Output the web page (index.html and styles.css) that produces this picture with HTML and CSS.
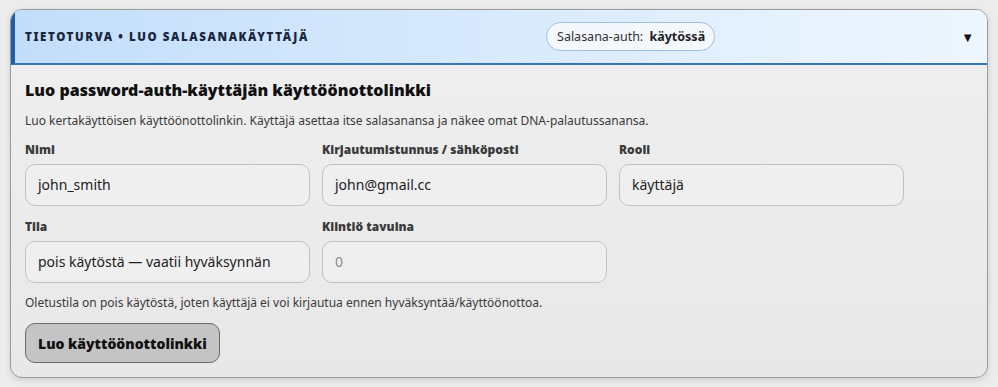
FILE: index.html
```html
<!DOCTYPE html>
<html>
  <head>
    <title>Luo salasanakäyttäjä</title>
    <link rel="stylesheet" href="styles.css">
  </head>
  <body>
    <div class="card">
      <div class="card-head">
        <span class="card-title">Tietoturva • Luo salasanakäyttäjä</span>
        <span class="pill">Salasana-auth: <b>käytössä</b></span>
        <span class="caret">▼</span>
      </div>
      <div class="card-body">
        <h2>Luo password-auth-käyttäjän käyttöönottolinkki</h2>
        <p class="desc">Luo kertakäyttöisen käyttöönottolinkin. Käyttäjä asettaa itse salasanansa ja näkee omat DNA-palautussanansa.</p>
        <div class="grid">
          <div class="field">
            <label>Nimi</label>
            <div class="input">john_smith</div>
          </div>
          <div class="field">
            <label>Kirjautumistunnus / sähköposti</label>
            <div class="input">john@gmail.cc</div>
          </div>
          <div class="field">
            <label>Rooli</label>
            <div class="input">käyttäjä</div>
          </div>
          <div class="field">
            <label>Tila</label>
            <div class="input">pois käytöstä — vaatii hyväksynnän</div>
          </div>
          <div class="field">
            <label>Kiintiö tavuina</label>
            <div class="input placeholder">0</div>
          </div>
        </div>
        <p class="hint">Oletustila on pois käytöstä, joten käyttäjä ei voi kirjautua ennen hyväksyntää/käyttöönottoa.</p>
        <button class="button">Luo käyttöönottolinkki</button>
      </div>
    </div>
  </body>
</html>
```

FILE: styles.css
```css
body {
  margin: 0;
  padding: 9px 10px;
  background: #ececec;
  font-family: "Noto Sans", sans-serif;
  color: #222;
}

.card {
  border: 1px solid #9a9a9a;
  border-radius: 12px;
  overflow: hidden;
  background: linear-gradient(#efefef, #e8e8e8);
  box-shadow: 0 2px 6px rgba(0, 0, 0, 0.12);
}

/* header strip */
.card-head {
  display: flex;
  align-items: center;
  height: 53px;
  padding: 0 13px 0 10px;
  border-left: 4px solid #1d5ea6;
  border-bottom: 2px solid #3574b6;
  background: linear-gradient(90deg, #c3defa, #eef6fe);
}

.card-title {
  flex: 1;
  font-size: 11.5px;
  font-weight: 900;
  letter-spacing: 1.6px;
  text-transform: uppercase;
  color: #1a2640;
}

.pill {
  margin-right: 246px;
  padding: 5px 9px 5px 10px;
  border: 1px solid #9cc0e2;
  border-radius: 16px;
  background: #f4f8fd;
  font-size: 12.5px;
  color: #333;
}

.pill b {
  margin-left: 3px;
  color: #222;
}

.caret {
  font-size: 13px;
  color: #111;
}

.card-body {
  padding: 14px;
}

h2 {
  margin: 0 0 11px;
  font-size: 16px;
  font-weight: 900;
  color: #111;
}

.desc, .hint {
  margin: 0;
  font-size: 12px;
  color: #3a3a3a;
}

.grid {
  display: grid;
  grid-template-columns: repeat(3, 285px);
  column-gap: 12px;
  row-gap: 12px;
  margin-top: 12px;
}

.field label {
  display: block;
  margin-bottom: 6px;
  font-size: 12px;
  font-weight: 900;
  color: #3a3a3a;
}

.input {
  height: 40px;
  line-height: 40px;
  padding: 0 12px;
  border: 1px solid #c2c2c2;
  border-radius: 10px;
  background: #efefef;
  font-size: 14px;
  color: #222;
  white-space: nowrap;
}

.placeholder {
  color: #888;
}

.hint {
  margin-top: 11px;
}

.button {
  margin-top: 12px;
  height: 40px;
  padding: 0 12px;
  border: 1px solid #6a6a6a;
  border-radius: 10px;
  background: #c4c4c4;
  font-family: inherit;
  font-size: 14px;
  font-weight: 900;
  color: #111;
}
```
